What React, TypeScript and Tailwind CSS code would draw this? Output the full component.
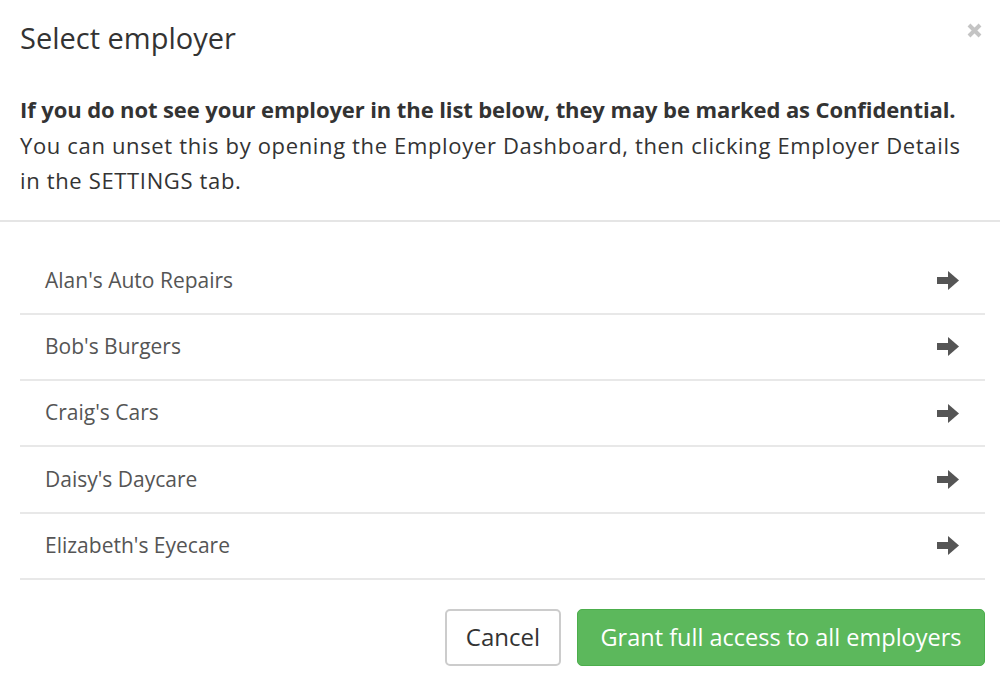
import React from 'react'

const employers = [
  "Alan's Auto Repairs",
  "Bob's Burgers",
  "Craig's Cars",
  "Daisy's Daycare",
  "Elizabeth's Eyecare",
]

// Font Awesome style solid arrow
function ArrowRight() {
  return (
    <svg width="22" height="19" viewBox="0 0 22 19" className="shrink-0">
      <rect x="0" y="6" width="12" height="7" fill="#555555" />
      <polygon points="11,0 22,9.5 11,19" fill="#555555" />
    </svg>
  )
}

function CloseIcon() {
  return (
    <svg width="15" height="15" viewBox="0 0 15 15">
      <path d="M2 2 L13 13 M13 2 L2 13" stroke="#c4c4c4" strokeWidth="4" />
    </svg>
  )
}

export default function App() {
  return (
    <div
      className="w-[1000px] h-[698px] bg-white overflow-hidden text-[#333333]"
      style={{ fontFamily: '"Open Sans", "Noto Sans", sans-serif' }}
    >
      {/* Header */}
      <div className="flex items-start justify-between pl-5 pr-[18px] pt-[18px]">
        <h1 className="text-[29px] leading-[40px] font-normal">Select employer</h1>
        <button className="mt-[5px]">
          <CloseIcon />
        </button>
      </div>

      {/* Explanation */}
      <div className="px-5 pt-[34px] pb-[21px] text-[22px] leading-[35.5px]">
        <p className="font-bold tracking-[-0.1px]">
          If you do not see your employer in the list below, they may be marked as Confidential.
        </p>
        <p className="tracking-[0.65px]">
          You can unset this by opening the Employer Dashboard, then clicking Employer Details in the SETTINGS tab.
        </p>
      </div>

      <div className="h-[2px] bg-[#e5e5e5]" />

      {/* Employer list */}
      <div className="pl-5 pr-[15px] pt-[27px]">
        {employers.map((name) => (
          <div
            key={name}
            className="flex items-center justify-between h-[66.25px] pl-[25px] pr-[26px] border-b-2 border-[#e8e8e8] text-[21px] text-[#555555] cursor-pointer"
          >
            <span>{name}</span>
            <ArrowRight />
          </div>
        ))}
      </div>

      {/* Footer */}
      <div className="flex justify-end gap-4 pr-[15px] pt-[29px]">
        <button className="h-[57px] px-[19px] rounded-[5px] border-2 border-[#cccccc] bg-white text-[24px] text-[#333333]">
          Cancel
        </button>
        <button className="h-[57px] px-[22.5px] rounded-[5px] border border-[#4cae4c] bg-[#5cb85c] text-[23.5px] text-white">
          Grant full access to all employers
        </button>
      </div>
    </div>
  )
}
